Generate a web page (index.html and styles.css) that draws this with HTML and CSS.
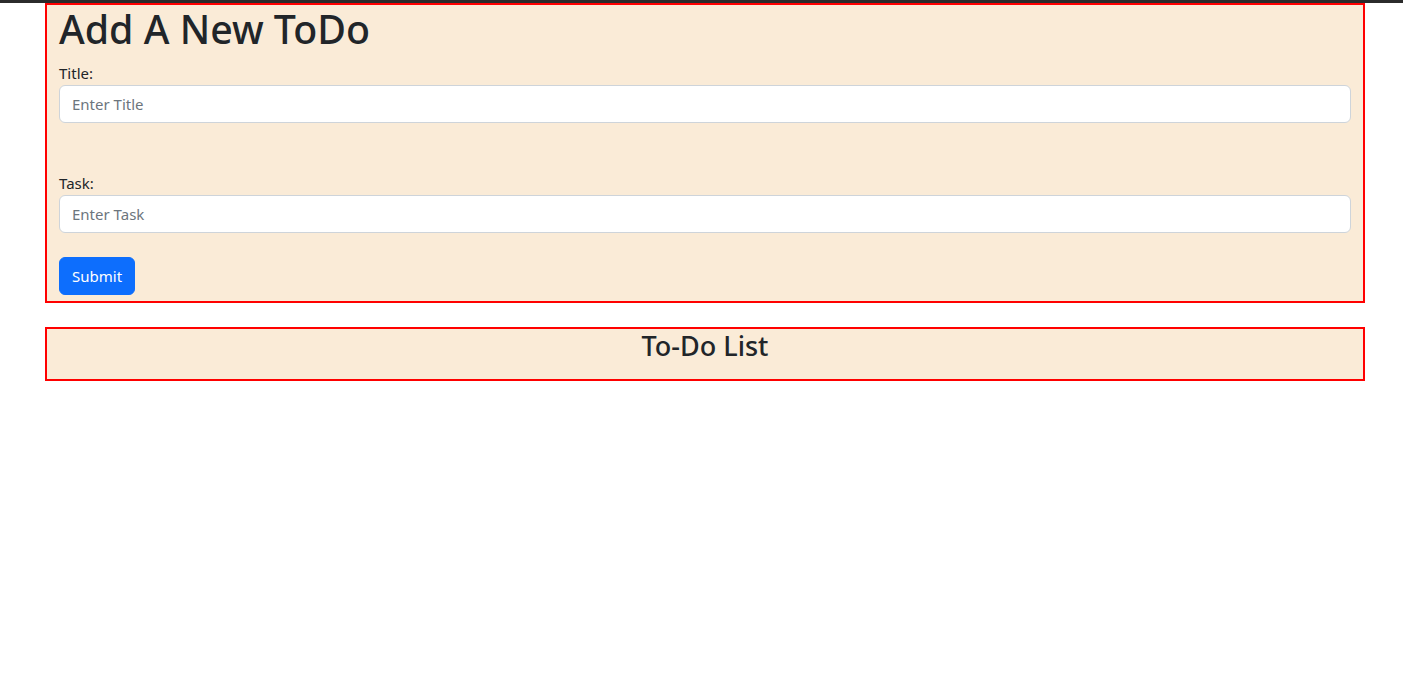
FILE: index.html
```html
<!DOCTYPE html>
<html lang="en">
<head>
<meta charset="utf-8">
<title>ToDo</title>
<link rel="stylesheet" href="styles.css">
</head>
<body>
<div class="topbar"></div>
<main class="page">
  <section class="panel form-panel">
    <h1 class="title">Add A New ToDo</h1>
    <form class="todo-form" onsubmit="return false">
      <label class="label" for="title">Title:</label>
      <input class="field" id="title" type="text" placeholder="Enter Title">
      <div class="spacer-lg"></div>
      <label class="label" for="task">Task:</label>
      <input class="field" id="task" type="text" placeholder="Enter Task">
      <div class="spacer-sm"></div>
      <button class="btn" type="submit">Submit</button>
    </form>
  </section>
  <section class="panel list-panel">
    <h3 class="list-title">To-Do List</h3>
  </section>
</main>
</body>
</html>
```
FILE: styles.css
```css
* { box-sizing: border-box; }
html, body {
  margin: 0;
  padding: 0;
  background: #fff;
  color: #212529;
  font-family: "Noto Sans", "Open Sans", sans-serif;
  font-size: 16px;
  line-height: 1.5;
}
.topbar {
  height: 3px;
  background: #2b2b2b;
}
.page {
  width: 1320px;
  margin-left: 45px;
  display: flex;
  flex-direction: column;
  gap: 24px;
}
.panel {
  background: antiquewhite;
  border: 2px solid red;
  padding: 0 12px;
}
.form-panel {
  padding-bottom: 6px;
}
.title {
  margin: 0 0 8px;
  font-size: 39.3px;
  font-weight: 500;
  line-height: 48px;
}
.todo-form {
  display: flex;
  flex-direction: column;
  align-items: flex-start;
}
.label {
  display: block;
  line-height: 24px;
  font-size: 15px;
}
.field {
  width: 100%;
  height: 38px;
  padding: 6px 12px;
  font: inherit;
  font-size: 15px;
  color: #212529;
  background: #fff;
  border: 1px solid #ced4da;
  border-radius: 6px;
  outline: none;
}
.field::placeholder { color: #6c757d; }
.spacer-lg { height: 48px; }
.spacer-sm { height: 24px; }
.btn {
  height: 38px;
  padding: 6px 12px;
  font: inherit;
  font-size: 15px;
  color: #fff;
  background: #0d6efd;
  border: 1px solid #0d6efd;
  border-radius: 6px;
  cursor: pointer;
}
.list-panel {
  padding-bottom: 8px;
}
.list-title {
  margin: 0 0 8px;
  text-align: center;
  font-size: 27px;
  font-weight: 500;
  line-height: 33.6px;
}
```
